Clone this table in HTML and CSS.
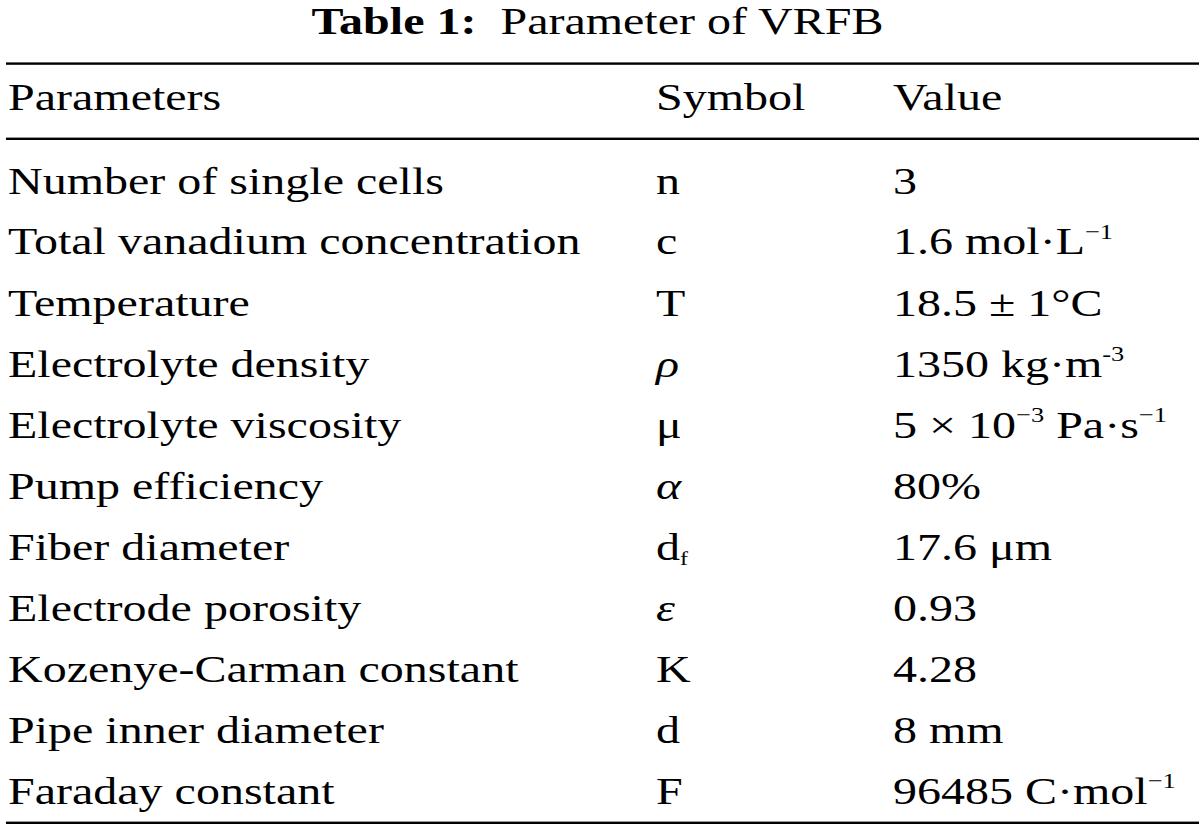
FILE: index.html
```html
<!DOCTYPE html>
<html lang="en">
<head>
<meta charset="utf-8">
<title>Table 1: Parameter of VRFB</title>
<link rel="stylesheet" href="styles.css">
</head>
<body>
<div class="frame">
  <div class="page">
    <h1 class="caption"><b>Table 1:</b>&nbsp; Parameter of VRFB</h1>
    <table class="params">
      <colgroup>
        <col class="c-name">
        <col class="c-sym">
        <col class="c-val">
      </colgroup>
      <thead>
        <tr><th>Parameters</th><th>Symbol</th><th>Value</th></tr>
      </thead>
      <tbody>
        <tr><td>Number of single cells</td><td>n</td><td>3</td></tr>
        <tr><td>Total vanadium concentration</td><td>c</td><td>1.6 mol·L<sup>−1</sup></td></tr>
        <tr><td>Temperature</td><td>T</td><td>18.5 ± 1°C</td></tr>
        <tr><td>Electrolyte density</td><td><i>ρ</i></td><td>1350 kg·m<sup>-3</sup></td></tr>
        <tr><td>Electrolyte viscosity</td><td>μ</td><td>5 × 10<sup>−3</sup> Pa·s<sup>−1</sup></td></tr>
        <tr><td>Pump efficiency</td><td><i>α</i></td><td>80%</td></tr>
        <tr><td>Fiber diameter</td><td>d<sub>f</sub></td><td>17.6 μm</td></tr>
        <tr><td>Electrode porosity</td><td><i>ε</i></td><td>0.93</td></tr>
        <tr><td>Kozenye-Carman constant</td><td>K</td><td>4.28</td></tr>
        <tr><td>Pipe inner diameter</td><td>d</td><td>8 mm</td></tr>
        <tr><td>Faraday constant</td><td>F</td><td>96485 C·mol<sup>−1</sup></td></tr>
      </tbody>
    </table>
  </div>
</div>
</body>
</html>
```

FILE: styles.css
```css
html, body {
  margin: 0;
  padding: 0;
  background: #ffffff;
}

.frame {
  width: 1204px;
  height: 833px;
  overflow: hidden;
}

.page {
  width: 1204px;
  font-family: "Liberation Serif", "Times New Roman", serif;
  font-size: 48px;
  color: #000000;
  transform: scaleY(0.8);
  transform-origin: 0 0;
}

.caption {
  margin: 0;
  padding-right: 9px;
  font-size: 48px;
  font-weight: normal;
  line-height: 53.4px;
  text-align: center;
}

.caption b {
  font-weight: bold;
}

.params {
  margin: 24.2px 0 0 6px;
  width: 1193px;
  table-layout: fixed;
  border-collapse: collapse;
  border-spacing: 0;
}

.c-name { width: 650px; }
.c-sym { width: 237px; }
.c-val { width: 306px; }

.params th,
.params td {
  padding: 0;
  text-align: left;
  font-weight: normal;
  white-space: nowrap;
  vertical-align: top;
}

.params th {
  line-height: 82.5px;
  padding-bottom: 9px;
  border-top: 3.75px solid #000000;
  border-bottom: 3.75px solid #000000;
}

.params td {
  line-height: 76.3px;
}

.params th:first-child,
.params td:first-child {
  padding-left: 2px;
}

.params tbody tr:first-child td {
  padding-top: 13px;
}

.params tbody tr:last-child td {
  border-bottom: 3.75px solid #000000;
}

.params sup {
  font-size: 0.55em;
  line-height: 0;
  vertical-align: 0.75em;
}

.params sub {
  font-size: 0.5em;
  line-height: 0;
  vertical-align: -0.25em;
}
```
